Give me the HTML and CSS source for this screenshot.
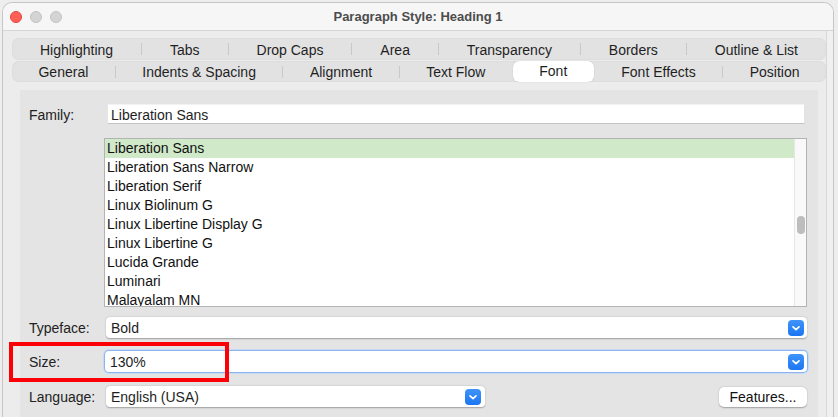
FILE: index.html
```html
<!DOCTYPE html>
<html>
<head>
<meta charset="utf-8">
<link rel="stylesheet" href="styles.css">
</head>
<body>
<div class="window">
  <div class="titlebar">
    <div class="lights"><span class="light red"></span><span class="light"></span><span class="light"></span></div>
    <div class="title">Paragraph Style: Heading 1</div>
    <div></div>
  </div>
  <div class="body">
    <div class="tabrow row1">
      <span class="tab">Highlighting</span><span class="sep"></span>
      <span class="tab">Tabs</span><span class="sep"></span>
      <span class="tab">Drop Caps</span><span class="sep"></span>
      <span class="tab">Area</span><span class="sep"></span>
      <span class="tab">Transparency</span><span class="sep"></span>
      <span class="tab">Borders</span><span class="sep"></span>
      <span class="tab">Outline &amp; List</span>
    </div>
    <div class="tabrow row2">
      <span class="tab">General</span><span class="sep"></span>
      <span class="tab">Indents &amp; Spacing</span><span class="sep"></span>
      <span class="tab">Alignment</span><span class="sep"></span>
      <span class="tab">Text Flow</span><span class="sep hidden"></span>
      <span class="tab selected">Font</span><span class="sep hidden"></span>
      <span class="tab">Font Effects</span><span class="sep"></span>
      <span class="tab">Position</span>
    </div>
    <div class="panel">
      <div class="row family-row">
        <span class="lbl">Family:</span>
        <div class="entry">Liberation Sans</div>
      </div>
      <div class="row list-row">
        <span class="lbl"></span>
        <div class="listbox">
          <div class="items">
            <div class="item active">Liberation Sans</div>
            <div class="item">Liberation Sans Narrow</div>
            <div class="item">Liberation Serif</div>
            <div class="item">Linux Biolinum G</div>
            <div class="item">Linux Libertine Display G</div>
            <div class="item">Linux Libertine G</div>
            <div class="item">Lucida Grande</div>
            <div class="item">Luminari</div>
            <div class="item">Malayalam MN</div>
          </div>
          <div class="scroll"><div class="thumb"></div></div>
        </div>
      </div>
      <div class="row typeface-row">
        <span class="lbl">Typeface:</span>
        <div class="combo wide"><span>Bold</span><span class="drop"><svg width="16" height="16" viewBox="0 0 16 16"><path d="M5 6.8 L8 9.6 L11 6.8" fill="none" stroke="#fff" stroke-width="1.7" stroke-linecap="round" stroke-linejoin="round"/></svg></span></div>
      </div>
      <div class="row size-row">
        <span class="lbl">Size:</span>
        <div class="combo wide focus"><span>130%</span><span class="drop"><svg width="16" height="16" viewBox="0 0 16 16"><path d="M5 6.8 L8 9.6 L11 6.8" fill="none" stroke="#fff" stroke-width="1.7" stroke-linecap="round" stroke-linejoin="round"/></svg></span></div>
        <div class="highlight"></div>
      </div>
      <div class="row lang-row">
        <span class="lbl">Language:</span>
        <div class="combo lang"><span>English (USA)</span><span class="drop"><svg width="16" height="16" viewBox="0 0 16 16"><path d="M5 6.8 L8 9.6 L11 6.8" fill="none" stroke="#fff" stroke-width="1.7" stroke-linecap="round" stroke-linejoin="round"/></svg></span></div>
        <div class="button">Features...</div>
      </div>
    </div>
  </div>
</div>
</body>
</html>
```
FILE: styles.css
```css
html, body {
  margin: 0;
  padding: 0;
  background: #eeeeee;
  overflow: hidden;
}
body {
  font-family: "Liberation Sans", Arial, sans-serif;
  font-size: 14px;
  color: #1e1e1e;
  height: 417px;
}
.window {
  margin: 2px 0 0 2px;
  width: 832px;
  height: 430px;
  box-sizing: border-box;
  border: 1px solid #c6c6c6;
  border-bottom: none;
  border-radius: 10px 10px 0 0;
  background: #f0f0f0;
  overflow: hidden;
  display: flex;
  flex-direction: column;
}
.titlebar {
  height: 27px;
  flex: none;
  background: #f6f6f6;
  border-bottom: 1px solid #d6d6d6;
  display: grid;
  grid-template-columns: 1fr auto 1fr;
  align-items: center;
}
.lights {
  display: flex;
  gap: 8px;
  padding-left: 7px;
}
.light {
  width: 12px;
  height: 12px;
  border-radius: 50%;
  box-sizing: border-box;
  background: #d4d4d4;
  border: 1px solid #c2c2c2;
}
.light.red {
  background: #fe5f57;
  border-color: #e1463f;
}
.title {
  font-weight: bold;
  font-size: 13px;
  color: #4c4c4c;
}
.body {
  flex: 1;
  margin-right: 6px;
  border-right: 1px solid #d8d8d8;
  background: #ececec;
  padding: 7px 0 0 9px;
  display: flex;
  flex-direction: column;
}
.tabrow {
  display: flex;
  align-items: center;
  background: #e2e2e2;
  border-radius: 7px;
  box-shadow: inset 0 0 0 1px #dddddd;
}
.row1 { height: 22px; }
.row1 .tab { line-height: 22px; padding-top: 1px; }
.row2 { height: 21px; margin-top: 1px; }
.row2 .tab { line-height: 20px; }
.tab {
  flex: 1 1 auto;
  text-align: center;
  white-space: nowrap;
  color: #1f1f1f;
}
.row2 .tab.selected {
  background: #ffffff;
  border-radius: 6px;
  height: 21px;
  line-height: 20px;
  box-shadow: 0 0 1px rgba(0,0,0,0.25);
}
.sep {
  flex: none;
  width: 1px;
  height: 12px;
  background: #c9c9c9;
}
.sep.hidden { background: transparent; }
.panel {
  flex: 1;
  margin: 8px 8px 0 8px;
  background: #e4e4e4;
  padding: 14px 11px 0 9px;
}
.row {
  display: flex;
  align-items: center;
  position: relative;
}
.lbl {
  width: 75px;
  flex: none;
  color: #222;
}
.family-row .lbl { padding-top: 2px; }
.entry {
  margin-left: 4px;
  width: 697px;
  height: 20px;
  box-sizing: border-box;
  background: #fff;
  border-top: 1px solid #f2f2f2;
  border-right: 1px solid #e2e2e2;
  border-bottom: 1px solid #c4c4c4;
  padding-left: 3px;
  line-height: 20px;
}
.list-row {
  margin-top: 14px;
  align-items: flex-start;
}
.listbox {
  width: 704px;
  height: 169px;
  box-sizing: border-box;
  border: 1px solid #b3b3b3;
  background: #fff;
  display: flex;
  overflow: hidden;
}
.items {
  flex: 1;
  overflow: hidden;
}
.item {
  height: 19px;
  line-height: 19px;
  padding-left: 2px;
  white-space: nowrap;
  color: #111;
}
.item.active {
  background: #d0e9c9;
}
.scroll {
  width: 12px;
  flex: none;
  background: #f9f9f9;
  border-left: 1px solid #e6e6e6;
  padding-top: 77px;
  box-sizing: border-box;
  display: flex;
  justify-content: center;
}
.thumb {
  width: 8px;
  height: 18px;
  border-radius: 4px;
  background: #bdbdbd;
}
.combo {
  height: 21px;
  box-sizing: border-box;
  background: #fff;
  border-radius: 4px;
  box-shadow: 0 0.5px 1.5px rgba(0,0,0,0.3);
  display: flex;
  align-items: center;
  justify-content: space-between;
  padding: 0 3px 0 5px;
}
.combo.wide {
  width: 703px;
  margin-left: 2px;
}
.combo.focus {
  margin-left: 1px;
  width: 704px;
  box-shadow: 0 0 0 1px #8db4ee, 0 0 0 2px #c6daf6;
}
.combo.lang {
  width: 379px;
  margin-left: 2px;
  padding-right: 4px;
}
.drop {
  width: 16px;
  height: 16px;
  border-radius: 4px;
  background: linear-gradient(#3f93f9, #1c76f2);
  display: flex;
}
.typeface-row { margin-top: 10px; }
.size-row { margin-top: 13px; }
.lang-row { margin-top: 14px; }
.highlight {
  position: absolute;
  left: -20px;
  top: -9px;
  width: 220px;
  height: 40px;
  box-sizing: border-box;
  border: 4px solid #fb0007;
}
.button {
  margin-left: auto;
  width: 88px;
  height: 20px;
  line-height: 20px;
  text-align: center;
  background: #fff;
  border-radius: 5px;
  box-shadow: 0 0.5px 1.5px rgba(0,0,0,0.3);
  color: #111;
}
```
